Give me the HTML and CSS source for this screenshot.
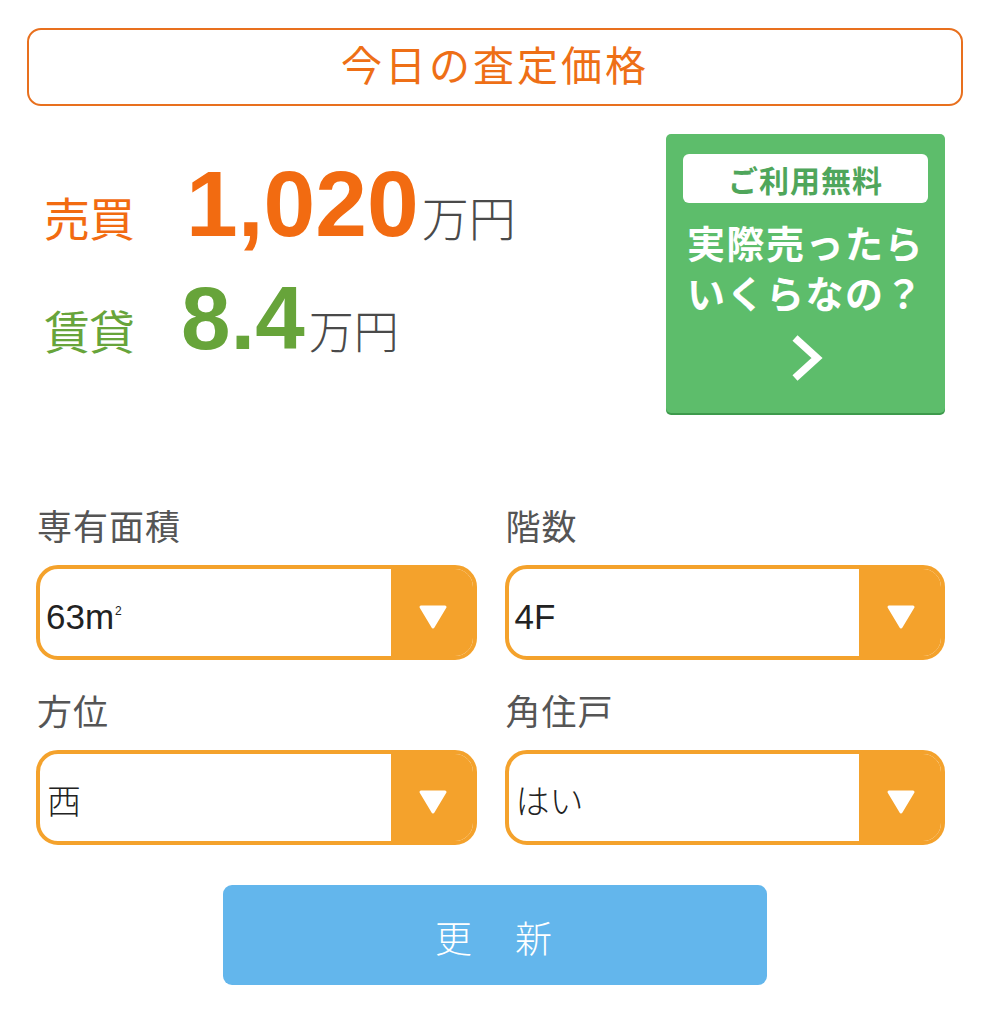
FILE: index.html
```html
<!DOCTYPE html>
<html lang="ja">
<head>
<meta charset="utf-8">
<link rel="stylesheet" href="styles.css">
</head>
<body>
<div class="page">
  <div class="title-box">今日の査定価格</div>

  <div class="price-area">
    <div class="prices">
      <div class="price-row sale">
        <span class="plabel">売買</span>
        <span class="pnum">1,020</span>
        <span class="punit">万円</span>
      </div>
      <div class="price-row rent">
        <span class="plabel">賃貸</span>
        <span class="pnum">8.4</span>
        <span class="punit">万円</span>
      </div>
    </div>
    <a class="promo">
      <div class="promo-pill">ご利用無料</div>
      <div class="promo-text">実際売ったら<br>いくらなの？</div>
      <svg class="promo-chev" width="34" height="50" viewBox="0 0 34 50"><polyline points="6,5 28,25 6,45" fill="none" stroke="#fff" stroke-width="7.5" stroke-linejoin="miter"/></svg>
    </a>
  </div>

  <div class="form-grid">
    <div class="field">
      <div class="flabel">専有面積</div>
      <div class="select"><div class="sval">63m<span class="sq">2</span></div><div class="sarrow"><svg width="30" height="26" viewBox="0 0 30 26"><polygon points="3,3 27,3 15,23" fill="#fff" stroke="#fff" stroke-width="3" stroke-linejoin="round"/></svg></div></div>
    </div>
    <div class="field">
      <div class="flabel">階数</div>
      <div class="select"><div class="sval">4F</div><div class="sarrow"><svg width="30" height="26" viewBox="0 0 30 26"><polygon points="3,3 27,3 15,23" fill="#fff" stroke="#fff" stroke-width="3" stroke-linejoin="round"/></svg></div></div>
    </div>
    <div class="field">
      <div class="flabel">方位</div>
      <div class="select"><div class="sval cjk">西</div><div class="sarrow"><svg width="30" height="26" viewBox="0 0 30 26"><polygon points="3,3 27,3 15,23" fill="#fff" stroke="#fff" stroke-width="3" stroke-linejoin="round"/></svg></div></div>
    </div>
    <div class="field">
      <div class="flabel">角住戸</div>
      <div class="select"><div class="sval cjk">はい</div><div class="sarrow"><svg width="30" height="26" viewBox="0 0 30 26"><polygon points="3,3 27,3 15,23" fill="#fff" stroke="#fff" stroke-width="3" stroke-linejoin="round"/></svg></div></div>
    </div>
  </div>

  <div class="btn-wrap"><button class="update">更　新</button></div>
</div>
</body>
</html>
```

FILE: styles.css
```css
html, body {
  margin: 0;
  padding: 0;
  background: #ffffff;
}
body {
  font-family: "Noto Sans CJK JP", "Noto Sans", sans-serif;
  color: #333;
  overflow: hidden;
  height: 1024px;
}
.page {
  width: 986px;
}
.title-box {
  margin: 28px 23px 0 27px;
  height: 66px;
  padding-bottom: 8px;
  box-sizing: content-box;
  border: 2px solid #e8701e;
  border-radius: 14px;
  display: flex;
  align-items: center;
  justify-content: center;
  color: #ee6f16;
  font-size: 41px;
  font-weight: 400;
  letter-spacing: 3px;
  line-height: 1;
}
.price-area {
  margin-top: 28px;
  height: 279px;
  display: flex;
  justify-content: space-between;
  padding: 0 41px 0 44px;
}
.prices {
  display: flex;
  flex-direction: column;
}
.price-row {
  display: flex;
  align-items: baseline;
  height: 112px;
}
.price-row.sale {
  margin-top: 24px;
}
.price-row.rent {
  margin-top: 4px;
}
.plabel {
  font-size: 46px;
  font-weight: 400;
  line-height: 1;
  width: 138px;
  letter-spacing: -1px;
}
.pnum {
  font-family: "Liberation Sans", Arial, sans-serif;
  font-weight: 700;
  line-height: 1;
}
.punit {
  color: #4a4a4a;
  font-weight: 300;
  line-height: 1;
}
.sale .plabel, .sale .pnum { color: #f26b11; }
.sale .pnum { font-size: 93px; margin-left: 4px; letter-spacing: 0; }
.sale .punit { font-size: 47px; margin-left: 3px; }
.rent .plabel, .rent .pnum { color: #67a43a; }
.rent .pnum { font-size: 89px; margin-left: -1px; letter-spacing: 0; }
.rent .punit { font-size: 45px; margin-left: 4px; }
.promo {
  width: 279px;
  height: 279px;
  background: #5dbd6b;
  border-radius: 5px;
  box-shadow: 0 2px 0 #3d9a4c;
  display: flex;
  flex-direction: column;
  align-items: center;
  box-sizing: border-box;
  padding-top: 20px;
}
.promo-pill {
  width: 245px;
  height: 49px;
  background: #fff;
  border-radius: 6px;
  color: #4fa65b;
  font-size: 30px;
  font-weight: 700;
  display: flex;
  align-items: center;
  justify-content: center;
  letter-spacing: 1px;
}
.promo-text {
  margin-top: 14px;
  color: #fff;
  font-size: 38px;
  font-weight: 700;
  line-height: 50px;
  text-align: center;
  letter-spacing: 1.5px;
}
.promo-chev {
  margin-top: 16px;
}
.form-grid {
  margin-top: 92px;
  padding: 0 41px 0 36px;
  display: grid;
  grid-template-columns: 1fr 1fr;
  column-gap: 28px;
  row-gap: 30px;
}
.flabel {
  font-size: 35px;
  line-height: 40px;
  color: #555;
  font-weight: 400;
  margin-left: 1px;
  letter-spacing: 1px;
}
.select {
  margin-top: 20px;
  height: 95px;
  box-sizing: border-box;
  border: 4px solid #f4a22c;
  border-radius: 22px;
  display: flex;
  overflow: hidden;
  background: #fff;
}
.sval {
  flex: 1;
  display: flex;
  align-items: center;
  padding-left: 6px;
  padding-top: 8px;
  font-family: "Liberation Sans", "Noto Sans CJK JP", sans-serif;
  font-size: 35px;
  color: #222;
}
.sval .sq {
  font-size: 12px;
  align-self: flex-start;
  margin-top: 27px;
  margin-left: 1px;
}
.sval.cjk {
  font-family: "Noto Sans CJK JP", sans-serif;
  font-weight: 300;
  font-size: 34px;
  padding-left: 7px;
  padding-top: 4px;
}
.sarrow {
  width: 80px;
  background: #f4a22c;
  display: flex;
  align-items: center;
  justify-content: center;
  padding-top: 8px;
  padding-left: 2px;
}
.btn-wrap {
  margin-top: 40px;
  display: flex;
  justify-content: center;
  padding-left: 4px;
}
.update {
  width: 544px;
  height: 100px;
  border: none;
  border-radius: 9px;
  background: #63b6ec;
  color: #fff;
  font-family: "Noto Sans CJK JP", sans-serif;
  font-size: 37px;
  font-weight: 300;
  letter-spacing: 3px;
  padding-top: 4px;
}
```
